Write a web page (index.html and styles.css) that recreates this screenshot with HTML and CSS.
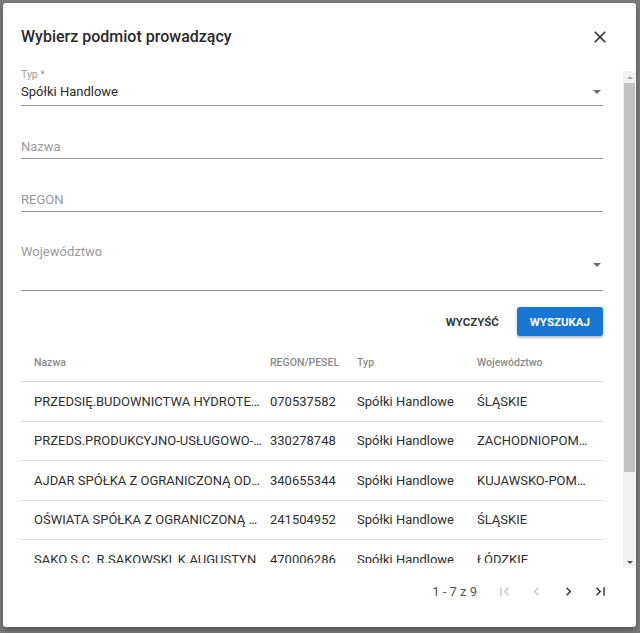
FILE: index.html
```html
<!DOCTYPE html>
<html lang="pl">
<head>
<meta charset="utf-8">
<title>Wybierz podmiot prowadzący</title>
<link rel="stylesheet" href="styles.css">
</head>
<body>
<div class="dialog">
  <header class="dlg-head">
    <h2 class="dlg-title">Wybierz podmiot prowadzący</h2>
    <button class="icon-btn close" aria-label="Zamknij">
      <svg viewBox="0 0 24 24" width="20" height="20"><path fill="currentColor" d="M19 6.41L17.59 5 12 10.59 6.41 5 5 6.41 10.59 12 5 17.59 6.41 19 12 13.41 17.59 19 19 17.59 13.41 12z"/></svg>
    </button>
  </header>

  <div class="dlg-body">
    <div class="scroll-content">
      <div class="field field-typ">
        <div class="field-label">Typ *</div>
        <div class="field-row">
          <span class="field-value">Spółki Handlowe</span>
          <span class="select-arrow"></span>
        </div>
      </div>
      <div class="field field-input">
        <div class="field-row"><span class="field-placeholder">Nazwa</span></div>
      </div>
      <div class="field field-input">
        <div class="field-row"><span class="field-placeholder">REGON</span></div>
      </div>
      <div class="field field-woj">
        <div class="field-row tall">
          <span class="field-placeholder">Województwo</span>
          <span class="select-arrow low"></span>
        </div>
      </div>

      <div class="actions">
        <button class="btn btn-flat">WYCZYŚĆ</button>
        <button class="btn btn-raised">WYSZUKAJ</button>
      </div>

      <div class="table">
        <div class="tr th">
          <div class="c c1">Nazwa</div>
          <div class="c c2">REGON/PESEL</div>
          <div class="c c3">Typ</div>
          <div class="c c4">Województwo</div>
        </div>
        <div class="tr">
          <div class="c c1">PRZEDSIĘ.BUDOWNICTWA HYDROTECHNICZNEGO</div>
          <div class="c c2">070537582</div>
          <div class="c c3">Spółki Handlowe</div>
          <div class="c c4">ŚLĄSKIE</div>
        </div>
        <div class="tr">
          <div class="c c1">PRZEDS.PRODUKCYJNO-USŁUGOWO-HANDLOWE</div>
          <div class="c c2">330278748</div>
          <div class="c c3">Spółki Handlowe</div>
          <div class="c c4">ZACHODNIOPOMORSKIE</div>
        </div>
        <div class="tr">
          <div class="c c1">AJDAR SPÓŁKA Z OGRANICZONĄ ODPOWIEDZIALNOŚCIĄ</div>
          <div class="c c2">340655344</div>
          <div class="c c3">Spółki Handlowe</div>
          <div class="c c4">KUJAWSKO-POMORSKIE</div>
        </div>
        <div class="tr">
          <div class="c c1">OŚWIATA SPÓŁKA Z OGRANICZONĄ ODPOWIEDZIALNOŚCIĄ</div>
          <div class="c c2">241504952</div>
          <div class="c c3">Spółki Handlowe</div>
          <div class="c c4">ŚLĄSKIE</div>
        </div>
        <div class="tr">
          <div class="c c1">SAKO S.C. R.SAKOWSKI, K.AUGUSTYN</div>
          <div class="c c2">470006286</div>
          <div class="c c3">Spółki Handlowe</div>
          <div class="c c4">ŁÓDZKIE</div>
        </div>
      </div>
    </div>

    <div class="scrollbar">
      <div class="sb-btn"><span class="sb-arrow up"></span></div>
      <div class="sb-thumb"></div>
      <div class="sb-space"></div>
      <div class="sb-btn"><span class="sb-arrow down"></span></div>
    </div>
  </div>

  <footer class="paginator">
    <span class="range">1 - 7 z 9</span>
    <button class="icon-btn pg disabled" aria-label="Pierwsza strona">
      <svg viewBox="0 0 24 24" width="17" height="17"><path fill="currentColor" d="M18.41 16.59L13.82 12l4.59-4.59L17 6l-6 6 6 6zM6 6h2v12H6z"/></svg>
    </button>
    <button class="icon-btn pg disabled" aria-label="Poprzednia strona">
      <svg viewBox="0 0 24 24" width="17" height="17"><path fill="currentColor" d="M15.41 7.41L14 6l-6 6 6 6 1.41-1.41L10.83 12z"/></svg>
    </button>
    <button class="icon-btn pg" aria-label="Następna strona">
      <svg viewBox="0 0 24 24" width="17" height="17"><path fill="currentColor" d="M8.59 16.59L10 18l6-6-6-6-1.41 1.41L13.17 12z"/></svg>
    </button>
    <button class="icon-btn pg" aria-label="Ostatnia strona">
      <svg viewBox="0 0 24 24" width="17" height="17"><path fill="currentColor" d="M5.59 7.41L10.18 12l-4.59 4.59L7 18l6-6-6-6zM16 6h2v12h-2z"/></svg>
    </button>
  </footer>
</div>
</body>
</html>
```

FILE: styles.css
```css
* { box-sizing: border-box; }

html, body {
  margin: 0;
  height: 633px;
  overflow: hidden;
}

body {
  background: #7c7c7c;
  padding: 3px 4px 0 3px;
  font-family: Roboto, "Liberation Sans", Arial, sans-serif;
  color: #2b2b2b;
}

.dialog {
  width: 633px;
  height: 624px;
  background: #fff;
  border-radius: 3px;
  box-shadow: 0 3px 6px rgba(0,0,0,0.35);
  display: flex;
  flex-direction: column;
}

.dlg-head {
  display: flex;
  align-items: center;
  justify-content: space-between;
  padding: 22px 26px 0 18px;
  height: 46px;
}

.dlg-title {
  margin: 0;
  font-size: 16px;
  line-height: 24px;
  font-weight: 500;
  color: #2a2a2a;
}

.icon-btn {
  border: 0;
  background: none;
  padding: 0;
  margin: 0;
  display: flex;
  align-items: center;
  justify-content: center;
  cursor: pointer;
}

.close {
  width: 20px;
  height: 24px;
  color: #3a3a3a;
}

.dlg-body {
  margin-top: 19px;
  height: 500px;
  display: flex;
  align-items: flex-start;
}

.scroll-content {
  flex: 1;
  min-width: 0;
  height: 495px;
  overflow: hidden;
  padding: 0 20px 0 18px;
}

/* form fields */
.field {
  border-bottom: 1px solid #959595;
}

.field-typ { padding-bottom: 3px; }
.field-input { padding-top: 31px; padding-bottom: 1px; }
.field-woj { padding-top: 30px; }

.field-label {
  font-size: 10.5px;
  line-height: 14px;
  color: #9a9a9a;
}

.field-row {
  display: flex;
  align-items: center;
  height: 20px;
  font-size: 13px;
  line-height: 20px;
}

.field-row.tall {
  height: 48px;
  align-items: flex-start;
}

.field-value {
  flex: 1;
  color: #2b2b2b;
}

.field-placeholder {
  flex: 1;
  color: #9a9a9a;
}

.select-arrow {
  width: 0;
  height: 0;
  border-left: 4.5px solid transparent;
  border-right: 4.5px solid transparent;
  border-top: 4.5px solid #6f6f6f;
  margin-right: 2px;
}

.select-arrow.low { margin-top: 21px; }

/* actions */
.actions {
  display: flex;
  justify-content: flex-end;
  gap: 6px;
  margin-top: 16px;
  height: 29px;
}

.btn {
  border: 0;
  margin: 0;
  font-family: Roboto, "Liberation Sans", Arial, sans-serif;
  font-size: 11.5px;
  font-weight: 700;
  height: 29px;
  border-radius: 3px;
  padding: 0 13px;
  cursor: pointer;
}

.btn-flat {
  background: transparent;
  color: #383838;
  padding: 0 12px 0 13px;
}

.btn-raised {
  background: #1976d2;
  color: #fff;
  box-shadow: 0 2px 2px rgba(0,0,0,0.18), 0 1px 4px rgba(0,0,0,0.12);
}

/* table */
.table {
  margin-top: 8px;
}

.tr {
  display: grid;
  grid-template-columns: 249px 87px 120px 1fr;
  height: 39.5px;
  align-items: center;
  border-bottom: 1px solid #dcdcdc;
  font-size: 13px;
  color: #2f2f2f;
}

.tr.th {
  height: 38px;
  font-size: 10.5px;
  font-weight: 500;
  color: #8a8a8a;
  border-bottom-color: #d6d6d6;
}

.c {
  white-space: nowrap;
  overflow: hidden;
  text-overflow: ellipsis;
  padding-right: 8px;
}

.c1 { padding-left: 13px; }
.c4 { padding-right: 13px; }

/* fake scrollbar */
.scrollbar {
  width: 13px;
  height: 497px;
  margin-top: 3px;
  background: #f1f1f1;
  display: flex;
  flex-direction: column;
}

.sb-btn {
  height: 12px;
  display: flex;
  align-items: center;
  justify-content: center;
}

.sb-arrow {
  width: 0;
  height: 0;
  border-left: 3px solid transparent;
  border-right: 3px solid transparent;
}

.sb-arrow.up { border-bottom: 3px solid #a3a3a3; }
.sb-arrow.down { border-top: 3px solid #505050; }

.sb-thumb {
  height: 389px;
  margin: 0 1px;
  background: #c1c1c1;
}

.sb-space { flex: 1; }

/* paginator */
.paginator {
  display: flex;
  align-items: center;
  justify-content: flex-end;
  height: 47px;
  padding-right: 20px;
}

.range {
  font-size: 13px;
  color: #555;
  margin-right: 11px;
}

.pg {
  width: 32px;
  height: 32px;
  color: #303030;
}

.pg.disabled { color: #c6c6c6; }
```
